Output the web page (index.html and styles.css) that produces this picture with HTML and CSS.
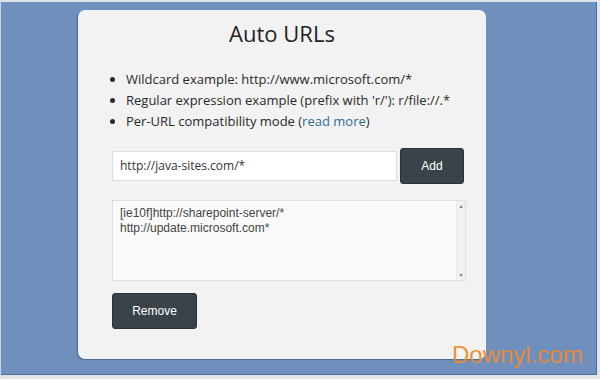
FILE: index.html
```html
<!DOCTYPE html>
<html>
<head>
<meta charset="utf-8">
<link rel="stylesheet" href="styles.css">
</head>
<body>
<div class="frame">
  <div class="card">
    <h1 class="title">Auto URLs</h1>
    <ul class="tips">
      <li>Wildcard example: http://www.microsoft.com/*</li>
      <li>Regular expression example (prefix with 'r/'): r/file://.*</li>
      <li>Per-URL compatibility mode (<a class="link" href="#">read more</a>)</li>
    </ul>
    <div class="add-row">
      <div class="url-input">http://java-sites.com/*</div>
      <button class="btn btn-add">Add</button>
    </div>
    <div class="list-box">
      <div class="list-text">[ie10f]http://sharepoint-server/*<br>http://update.microsoft.com*</div>
      <div class="scrollbar">
        <span class="arrow">&#9652;</span>
        <span class="arrow">&#9662;</span>
      </div>
    </div>
    <button class="btn btn-remove">Remove</button>
  </div>
  <div class="watermark">Downyl.com</div>
</div>
</body>
</html>
```

FILE: styles.css
```css
html, body {
  margin: 0;
  padding: 0;
}
body {
  background: #e4e6ea;
}
.frame {
  position: relative;
  width: 600px;
  height: 379px;
  box-sizing: border-box;
  background: #6f8fbd;
  border-top: 2px solid #dfe2e6;
  border-left: 1px solid #c9d2de;
  border-right: 3px solid #e2e4e7;
  border-bottom: 4px solid #e2e4e7;
  box-shadow: inset -1px -1px 0 #4f6d98;
  padding: 8px 0 0 77px;
  font-family: "Open Sans", "DejaVu Sans", sans-serif;
}
.card {
  width: 408px;
  height: 349px;
  box-sizing: border-box;
  background: #f2f2f2;
  border-radius: 7px;
  box-shadow: -1px 1px 1px rgba(40, 60, 90, 0.45);
  padding: 7px 20px 0 34px;
}
.title {
  margin: 0 0 0 -14px;
  font-size: 22px;
  line-height: 32px;
  font-weight: 400;
  color: #222;
  text-align: center;
}
.tips {
  margin: 20px 0 16px;
  padding: 0 0 0 14px;
  font-size: 13px;
  line-height: 21px;
  color: #2a2a2a;
}
.link {
  color: #2e6f91;
  text-decoration: none;
}
.add-row {
  display: flex;
  align-items: center;
  gap: 3px;
}
.url-input {
  width: 285px;
  height: 30px;
  box-sizing: border-box;
  background: #fff;
  border: 1px solid #dcdcdc;
  padding: 0 7px;
  font-size: 12px;
  line-height: 28px;
  color: #333;
}
.btn {
  height: 36px;
  border: 1px solid #2b3238;
  border-radius: 3px;
  background: #3a434a;
  color: #fff;
  font-family: "Liberation Sans", Arial, sans-serif;
  font-size: 12px;
  padding: 0;
  cursor: pointer;
}
.btn-add {
  width: 64px;
}
.list-box {
  margin-top: 16px;
  width: 354px;
  height: 81px;
  box-sizing: border-box;
  display: flex;
  background: #fafafa;
  border: 1px solid #dedede;
}
.list-text {
  flex: 1;
  padding: 5px 7px;
  font-family: "Liberation Sans", Arial, sans-serif;
  font-size: 12px;
  line-height: 15px;
  color: #444;
}
.scrollbar {
  width: 8px;
  display: flex;
  flex-direction: column;
  justify-content: space-between;
  align-items: center;
  background: #f1f1f1;
  border-left: 1px solid #e8e8e8;
  padding: 1px 0;
}
.arrow {
  font-size: 6px;
  line-height: 8px;
  color: #777;
}
.btn-remove {
  margin-top: 12px;
  width: 85px;
}
.watermark {
  position: absolute;
  left: 451px;
  top: 339px;
  font-family: "Liberation Sans", Arial, sans-serif;
  font-size: 24px;
  color: #ef8a2e;
  opacity: 0.92;
}
```
